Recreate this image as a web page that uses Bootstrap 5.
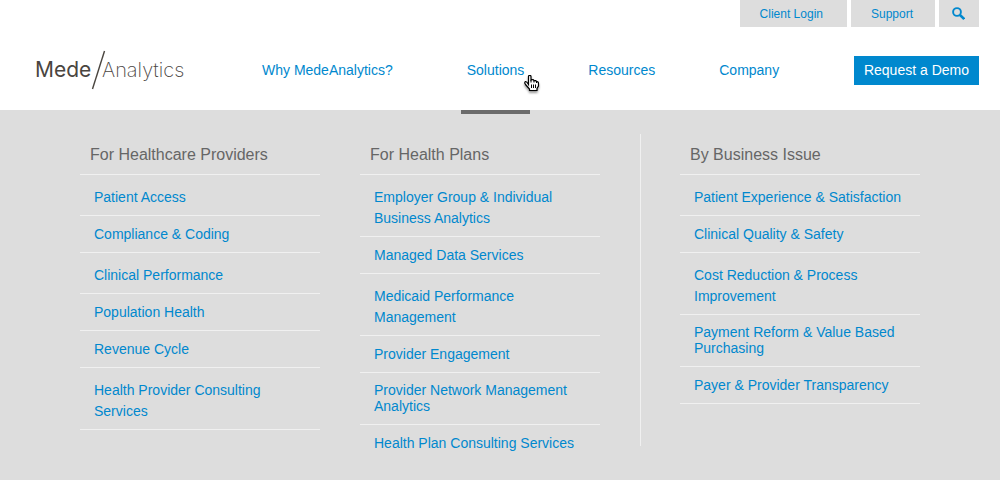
<!DOCTYPE html>
<html lang="en">
<head>
<meta charset="utf-8">
<meta name="viewport" content="width=device-width, initial-scale=1">
<title>MedeAnalytics</title>
<link href="https://cdn.jsdelivr.net/npm/bootstrap@5.3.0/dist/css/bootstrap.min.css" rel="stylesheet">
<style>
  body { font-family: "Liberation Sans", Arial, sans-serif; font-size: 14px; line-height: 21px; background: #ddd; }
  a { color: #0088ce; text-decoration: none; }
  .site-header { background: #fff; }
  .utility { gap: 4px; padding-right: 21px; margin-bottom: 3px; }
  .utility-item { background: #ddd; color: #0088ce; font-size: 12px; line-height: 28px; height: 27px; padding: 0 22px 0 20px; border: 0; }
  .utility-search { padding: 0 14px 0 13px; }
  .main-row { height: 80px; padding: 0 21px 0 35px; }
  .logo { color: #4a453f; width: 154px; height: 40px; }
  .logo-bold { font-family: Inter, sans-serif; font-weight: 400; font-size: 21px; }
  .logo-thin { font-family: Inter, sans-serif; font-weight: 200; font-size: 20px; }
  .main-nav { gap: 52px; margin-left: 67px; }
  .main-nav .nav-link { color: #0088ce; padding: 0 6px; }
  .main-nav > .nav-link:first-child { margin-right: 10px; }
  .main-nav .nav-link.active::after { content: ""; position: absolute; left: 0; right: 0; top: 100%; height: 4px; background: #6b6b6b; }
  .pointer { position: absolute; left: 63px; top: 45px; z-index: 2; filter: drop-shadow(0 2px 1px rgba(0,0,0,.4)); }
  .btn-demo { background: #0088ce; color: #fff; font-size: 14px; line-height: 21px; padding: 4px 10px; border: 0; border-radius: 0; }
  .mega { gap: 40px; padding: 24px 80px; }
  .mega-col { flex: 1 1 0; min-width: 0; }
  .mega h2 { font-size: 16px; line-height: 38px; font-weight: 400; color: #666; padding: 2px 0 0 10px; margin: 0; border-bottom: 1px solid #f0f0f0; }
  .mega li { padding: 8px 14px 7px; border-bottom: 1px solid #f0f0f0; }
  .mega li.roomy { padding-top: 12px; }
  .mega li.tight { line-height: 16px; padding: 9px 14px 10px; }
  .mega li.open-end { border-bottom: 0; padding-bottom: 0; }
  .mega-rule { width: 1px; height: 312px; background: #f0f0f0; margin-right: -1px; }
</style>
</head>
<body>
<header class="site-header">
  <div class="utility d-flex justify-content-end">
    <a class="utility-item pe-4" href="#">Client Login</a>
    <a class="utility-item" href="#">Support</a>
    <button class="utility-item utility-search d-flex align-items-center" type="button" aria-label="Search">
      <svg width="13" height="13" viewBox="0 0 13 13" fill="none" stroke="#0088ce"><circle cx="5" cy="5" r="3.900" stroke-width="1.900"/><path d="M8 8L12.200 12" stroke-width="2.500"/></svg>
    </button>
  </div>
  <div class="main-row d-flex align-items-stretch">
    <a class="align-self-center flex-shrink-0" href="#" aria-label="MedeAnalytics">
      <svg class="logo d-block" viewBox="0 0 154 40" fill="currentColor">
        <text class="logo-bold" x="0" y="27">Mede</text>
        <path d="M57.500 39L69.500 1" stroke="currentColor" stroke-width="1.400"/>
        <text class="logo-thin" x="67" y="27">Analytics</text>
      </svg>
    </a>
    <nav class="main-nav nav flex-nowrap" aria-label="Main">
      <a class="nav-link d-flex align-items-center" href="#">Why MedeAnalytics?</a>
      <div class="nav-item position-relative d-flex">
        <a class="nav-link active d-flex align-items-center position-relative" href="#">Solutions</a>
        <svg class="pointer" width="17" height="18" viewBox="0 0 17 18"><path d="M4.500 9.500V1.500Q4.500.5 5.500.5H6Q7 .5 7 1.500V5Q9.500 4 10 5.800Q12 5 12.500 6.800Q14.500 6.300 14.500 8.500V11L13 13.500V15.500H5.500V14L1.500 9.500Q0 7.500 1.500 6.500Q2.500 6.200 4.500 9.500Z" fill="#fff" stroke="#000" stroke-width="1.200"/><path d="M7.500 9.500V13M9.500 9.500V13M11.500 9.500V13M7 5V7.500M10 5.800V7.500M12.500 6.800V8" stroke="#000" stroke-width="1"/></svg>
      </div>
      <a class="nav-link d-flex align-items-center" href="#">Resources</a>
      <a class="nav-link d-flex align-items-center" href="#">Company</a>
    </nav>
    <button class="btn btn-demo ms-auto align-self-center text-nowrap" type="button">Request a Demo</button>
  </div>
</header>
<main class="mega d-flex align-items-start">
  <section class="mega-col">
    <h2>For Healthcare Providers</h2>
    <ul class="list-unstyled mb-0">
      <li class="roomy"><a href="#">Patient Access</a></li>
      <li><a href="#">Compliance &amp; Coding</a></li>
      <li class="roomy"><a href="#">Clinical Performance</a></li>
      <li><a href="#">Population Health</a></li>
      <li><a href="#">Revenue Cycle</a></li>
      <li class="roomy"><a href="#">Health Provider Consulting<br>Services</a></li>
    </ul>
  </section>
  <section class="mega-col">
    <h2>For Health Plans</h2>
    <ul class="list-unstyled mb-0">
      <li class="roomy"><a href="#">Employer Group &amp; Individual<br>Business Analytics</a></li>
      <li><a href="#">Managed Data Services</a></li>
      <li class="roomy"><a href="#">Medicaid Performance<br>Management</a></li>
      <li><a href="#">Provider Engagement</a></li>
      <li class="tight"><a href="#">Provider Network Management<br>Analytics</a></li>
      <li class="open-end"><a href="#">Health Plan Consulting Services</a></li>
    </ul>
  </section>
  <div class="mega-rule"></div>
  <section class="mega-col">
    <h2>By Business Issue</h2>
    <ul class="list-unstyled mb-0">
      <li class="roomy"><a href="#">Patient Experience &amp; Satisfaction</a></li>
      <li><a href="#">Clinical Quality &amp; Safety</a></li>
      <li class="roomy"><a href="#">Cost Reduction &amp; Process<br>Improvement</a></li>
      <li class="tight"><a href="#">Payment Reform &amp; Value Based<br>Purchasing</a></li>
      <li><a href="#">Payer &amp; Provider Transparency</a></li>
    </ul>
  </section>
</main>
<script src="https://cdn.jsdelivr.net/npm/bootstrap@5.3.0/dist/js/bootstrap.bundle.min.js"></script>
</body>
</html>
